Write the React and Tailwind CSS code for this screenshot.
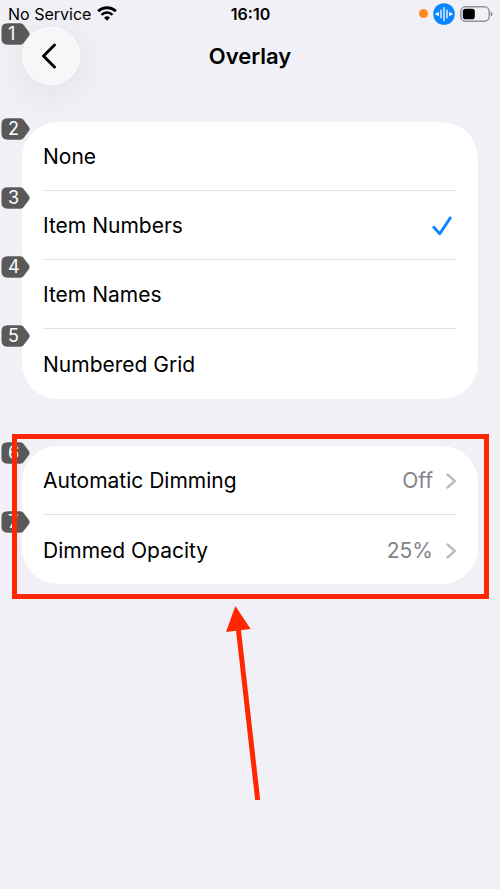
import { useState } from 'react'

const overlayOptions = [
  { badge: 2, label: 'None' },
  { badge: 3, label: 'Item Numbers' },
  { badge: 4, label: 'Item Names' },
  { badge: 5, label: 'Numbered Grid' }
]

const dimmingLinks = [
  { badge: 6, label: 'Automatic Dimming', value: 'Off', href: '#automatic-dimming' },
  { badge: 7, label: 'Dimmed Opacity', value: '25%', href: '#dimmed-opacity' }
]

// Voice Control tag that hangs over the left edge of an item
const Badge = ({ number }) => (
  <span className="absolute -left-[22px] -top-[5px] w-[31px] h-6 flex items-center pl-2 text-lg leading-6 text-white">
    <svg className="absolute inset-0 w-full h-full" viewBox="0 0 31 24" aria-hidden="true">
      <path
        d="M7.6 1H20.4Q22.4 1 23.7 2.7L29.2 10Q30.8 12 29.2 14L23.7 21.3Q22.4 23 20.4 23H7.6Q1.2 23 1.2 16.6V7.4Q1.2 1 7.6 1Z"
        fill="#595959"
        stroke="#fff"
        strokeOpacity="0.6"
        strokeWidth="0.8"
      />
    </svg>
    <span className="relative">{number}</span>
  </span>
)

const WifiIcon = () => (
  <svg className="w-5 h-[15px]" viewBox="0 0 20 15" fill="none" aria-hidden="true">
    <path d="M1.2 5.3A12.6 12.6 0 0 1 18.8 5.3" stroke="#000" strokeWidth="2.9" />
    <path d="M4.5 8.8A7.8 7.8 0 0 1 15.5 8.8" stroke="#000" strokeWidth="2.6" />
    <path d="M10 14.8L7 11.7A4.5 4.5 0 0 1 13 11.7Z" fill="#000" />
  </svg>
)

const VoiceIcon = () => (
  <svg className="w-[22px] h-[22px]" viewBox="0 0 22 22" aria-hidden="true">
    <circle cx="11" cy="11" r="10.8" fill="#0a84ff" />
    <path d="M11 4.6V17.4M8 7.2V14.8M14 7.2V14.8" stroke="#fff" strokeWidth="1.3" strokeLinecap="round" />
    <path d="M5.9 8.8V13.2L1.8 11ZM16.1 8.8V13.2L20.2 11Z" fill="#fff" />
  </svg>
)

const BatteryIcon = () => (
  <svg className="w-[33px] h-4" viewBox="0 0 33 16" aria-hidden="true">
    <rect x="0.8" y="0.8" width="28.4" height="14.4" rx="4.8" fill="none" stroke="#939397" strokeWidth="1.5" />
    <rect x="2.8" y="2.8" width="12" height="10.4" rx="2.8" fill="#000" />
    <path d="M30.6 5.4Q32.6 6 32.6 8T30.6 10.6Z" fill="#939397" />
  </svg>
)

const StatusBar = () => (
  <div className="grid grid-cols-3 items-center h-[27px] pl-2 pr-[7px] text-base leading-6">
    <div className="flex items-center gap-[6px] whitespace-nowrap">
      <span>No Service</span>
      <WifiIcon />
    </div>
    <div className="text-center font-semibold">16:10</div>
    <div className="flex items-center justify-end gap-[5px]">
      <span className="w-[9px] h-[9px] rounded-full bg-[#ff8a22]"></span>
      <VoiceIcon />
      <BatteryIcon />
    </div>
  </div>
)

const App = () => {
  const [selected, setSelected] = useState('Item Numbers')

  return (
    <div className="min-h-screen bg-[#f1f0f6] text-black font-['Inter','Liberation_Sans',sans-serif]">
      <StatusBar />

      <header className="grid grid-cols-[58px_1fr_58px] items-center px-[22px]">
        <div className="relative">
          <button
            type="button"
            aria-label="Back"
            className="w-[58px] h-[58px] flex items-center justify-center rounded-full bg-[#f7f7f7] border border-white shadow-[0_8px_40px_rgba(0,0,0,0.08)]"
          >
            <svg className="w-4 h-7 -ml-1" viewBox="0 0 16 28" fill="none" aria-hidden="true">
              <path d="M13.5 3L2.5 14L13.5 25" stroke="#000" strokeWidth="3" strokeLinecap="round" strokeLinejoin="round" />
            </svg>
          </button>
          <Badge number={1} />
        </div>
        <h1 id="page-title" className="text-center text-[22px] leading-7 font-semibold">Overlay</h1>
      </header>

      <main className="px-[22px] pt-[37px] text-[21px] leading-7">
        <div role="radiogroup" aria-labelledby="page-title" className="rounded-[36px] bg-white">
          {overlayOptions.map((option, index) => (
            <label key={option.label} className="relative block px-[21px] cursor-pointer">
              <input
                type="radio"
                name="overlay"
                className="sr-only"
                checked={selected === option.label}
                onChange={() => setSelected(option.label)}
              />
              <Badge number={option.badge} />
              <span
                className={`flex items-center justify-between pt-[2px] ${index < overlayOptions.length - 1 ? 'h-[69px] border-b border-[#e2e2e4]' : 'h-[70px]'}`}
              >
                {option.label}
                {selected === option.label && (
                  <svg className="w-5 h-5 mr-[5px]" viewBox="0 0 20 20" fill="none" aria-hidden="true">
                    <path d="M1.8 11.2L7.8 17.8L18.2 2" stroke="#0a84ff" strokeWidth="2.9" strokeLinecap="round" strokeLinejoin="round" />
                  </svg>
                )}
              </span>
            </label>
          ))}
        </div>

        <nav aria-label="Dimming" className="relative mt-[47px] rounded-[36px] bg-white">
          {dimmingLinks.map((item, index) => (
            <a key={item.label} href={item.href} className="relative block px-[21px]">
              <Badge number={item.badge} />
              <span
                className={`flex items-center h-[69px] pt-[2px] ${index < dimmingLinks.length - 1 ? 'border-b border-[#e2e2e4]' : ''}`}
              >
                <span className="flex-1">{item.label}</span>
                <span className="text-[#838387]">{item.value}</span>
                <svg className="w-3 h-4 ml-3" viewBox="0 0 12 16" fill="none" aria-hidden="true">
                  <path d="M2.5 1.5L9.8 8L2.5 14.5" stroke="#bdbdc0" strokeWidth="2.4" strokeLinecap="round" strokeLinejoin="round" />
                </svg>
              </span>
            </a>
          ))}
          <div className="absolute -left-[10px] -right-[11px] -top-3 -bottom-[15px] border-[5px] border-[#ff2600] pointer-events-none"></div>
        </nav>

        <svg className="w-[60px] h-[196px] mx-auto mt-[22px]" viewBox="0 0 60 196" aria-hidden="true">
          <path d="M18 20L37.7 194" stroke="#ff2600" strokeWidth="5" />
          <path d="M15.4 0L30.6 23L6 26Z" fill="#ff2600" />
        </svg>
      </main>
    </div>
  )
}

export default App
